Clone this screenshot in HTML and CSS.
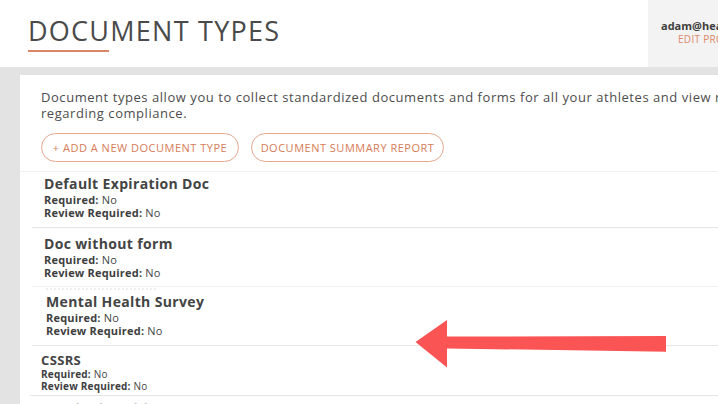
FILE: index.html
```html
<!DOCTYPE html>
<html>
<head>
<meta charset="utf-8">
<link rel="stylesheet" href="styles.css">
</head>
<body>
<div class="page">
  <header class="top">
    <div class="title-wrap">
      <h1 class="title">DOCUMENT TYPES</h1>
      <div class="title-line"></div>
    </div>
    <div class="user">
      <div class="user-email">adam@healthathlete.com</div>
      <div class="user-edit">EDIT PROFILE</div>
    </div>
  </header>
  <main class="main">
    <section class="card">
      <p class="desc">Document types allow you to collect standardized documents and forms for all your athletes and view reports regarding compliance.</p>
      <div class="actions">
        <button class="btn btn-add">+ ADD A NEW DOCUMENT TYPE</button>
        <button class="btn btn-report">DOCUMENT SUMMARY REPORT</button>
      </div>
      <ul class="list">
        <li class="row row-a">
          <div class="row-title">Default Expiration Doc</div>
          <div class="row-meta"><b>Required:</b> No</div>
          <div class="row-meta"><b>Review Required:</b> No</div>
        </li>
        <li class="row row-a row-b2">
          <div class="row-title">Doc without form</div>
          <div class="row-meta"><b>Required:</b> No</div>
          <div class="row-meta"><b>Review Required:</b> No</div>
        </li>
        <li class="row row-c">
          <div class="ghost"></div>
          <div class="row-title">Mental Health Survey</div>
          <div class="row-meta"><b>Required:</b> No</div>
          <div class="row-meta"><b>Review Required:</b> No</div>
        </li>
        <li class="row row-d">
          <div class="row-title">CSSRS</div>
          <div class="row-meta"><b>Required:</b> No</div>
          <div class="row-meta"><b>Review Required:</b> No</div>
        </li>
        <li class="row row-e">
          <div class="row-title">Standard Health</div>
        </li>
      </ul>
    </section>
  </main>
  <svg class="arrow" width="260" height="52" viewBox="410 318 260 52" aria-hidden="true">
    <polygon fill="#fb5454" points="415.5,342 447,320 447,336.6 666,336 666,351.8 447,348.4 447,367.5"/>
  </svg>
</div>
</body>
</html>
```

FILE: styles.css
```css
* { box-sizing: border-box; }
html, body { margin: 0; padding: 0; }
body {
  width: 718px;
  height: 404px;
  overflow: hidden;
  background: #fff;
  font-family: "Open Sans", "DejaVu Sans", sans-serif;
  color: #4a4a4a;
}
.page { position: relative; width: 718px; height: 404px; overflow: hidden; }

.top {
  display: flex;
  height: 67px;
  background: #fff;
}
.title-wrap {
  flex: 1;
  padding: 14px 0 0 28px;
}
.title {
  margin: 0;
  font-size: 27px;
  font-weight: 400;
  letter-spacing: 1.25px;
  line-height: 34px;
  color: #4a4a4a;
}
.title-line {
  width: 81px;
  height: 2px;
  margin-top: 2px;
  background: #d98462;
}
.user {
  width: 70px;
  background: #f3f3f3;
  overflow: hidden;
  white-space: nowrap;
  padding: 19px 0 0 13px;
}
.user-email {
  font-size: 11px;
  font-weight: 700;
  color: #3e3e3e;
  line-height: 14px;
}
.user-edit {
  font-size: 10px;
  color: #dc8a6c;
  line-height: 13px;
  padding-left: 17px;
  letter-spacing: 0.3px;
}

.main {
  background: #e3e3e3;
  padding: 8px 0 0 20px;
  height: 337px;
}
.card {
  background: #fff;
  height: 100%;
  padding: 14px 0 0 21px;
}
.desc {
  margin: 0;
  font-size: 13px;
  line-height: 16px;
  letter-spacing: 0.55px;
  color: #4d4d4d;
  width: 745px;
}
.actions {
  display: flex;
  gap: 12px;
  margin-top: 12px;
}
.btn {
  height: 29px;
  border: 1px solid #e5a78d;
  border-radius: 15px;
  background: #fff;
  color: #d67c57;
  font-family: inherit;
  font-size: 11px;
  letter-spacing: 0.5px;
  padding: 0 6px;
}
.btn-add { width: 198px; }
.btn-report { width: 193px; }

.list {
  list-style: none;
  margin: 9px 0 0 -21px;
  padding: 0;
  border-top: 1px solid #f0f0f0;
}
.row {
  border-bottom: 1px solid #e6e6e6;
  margin-left: 12px;
}
.row-title {
  font-size: 14px;
  font-weight: 700;
  color: #444;
  line-height: 18px;
  letter-spacing: 0.35px;
}
.row-meta {
  font-size: 11px;
  color: #444;
  line-height: 13px;
  letter-spacing: 0.2px;
}
.row-meta b { font-weight: 700; color: #3e3e3e; }

.row-a { height: 56px; padding: 3px 0 0 12px; }
.row-b2 { height: 59px; padding-top: 7px; border-bottom-color: #f2f2f2; }
.row-c { height: 58px; padding: 0 0 0 14px; border-bottom-color: #e8e8e8; }
.row-c .ghost {
  height: 4px;
  width: 110px;
  margin-top: 1px;
  border-top: 2px dotted #eeeeee;
}
.row-c .row-title { margin-top: 1px; }
.row-d { height: 50px; padding: 6px 0 0 11px; margin-left: 10px; }
.row-d .row-title { font-size: 13px; line-height: 16px; }
.row-d .row-meta { font-size: 10px; line-height: 12px; }
.row-e { border: none; padding: 3px 0 0 11px; margin-left: 10px; }
.row-e .row-title { font-size: 13px; color: #c4c4c4; }

.arrow {
  position: absolute;
  left: 410px;
  top: 318px;
}
```
